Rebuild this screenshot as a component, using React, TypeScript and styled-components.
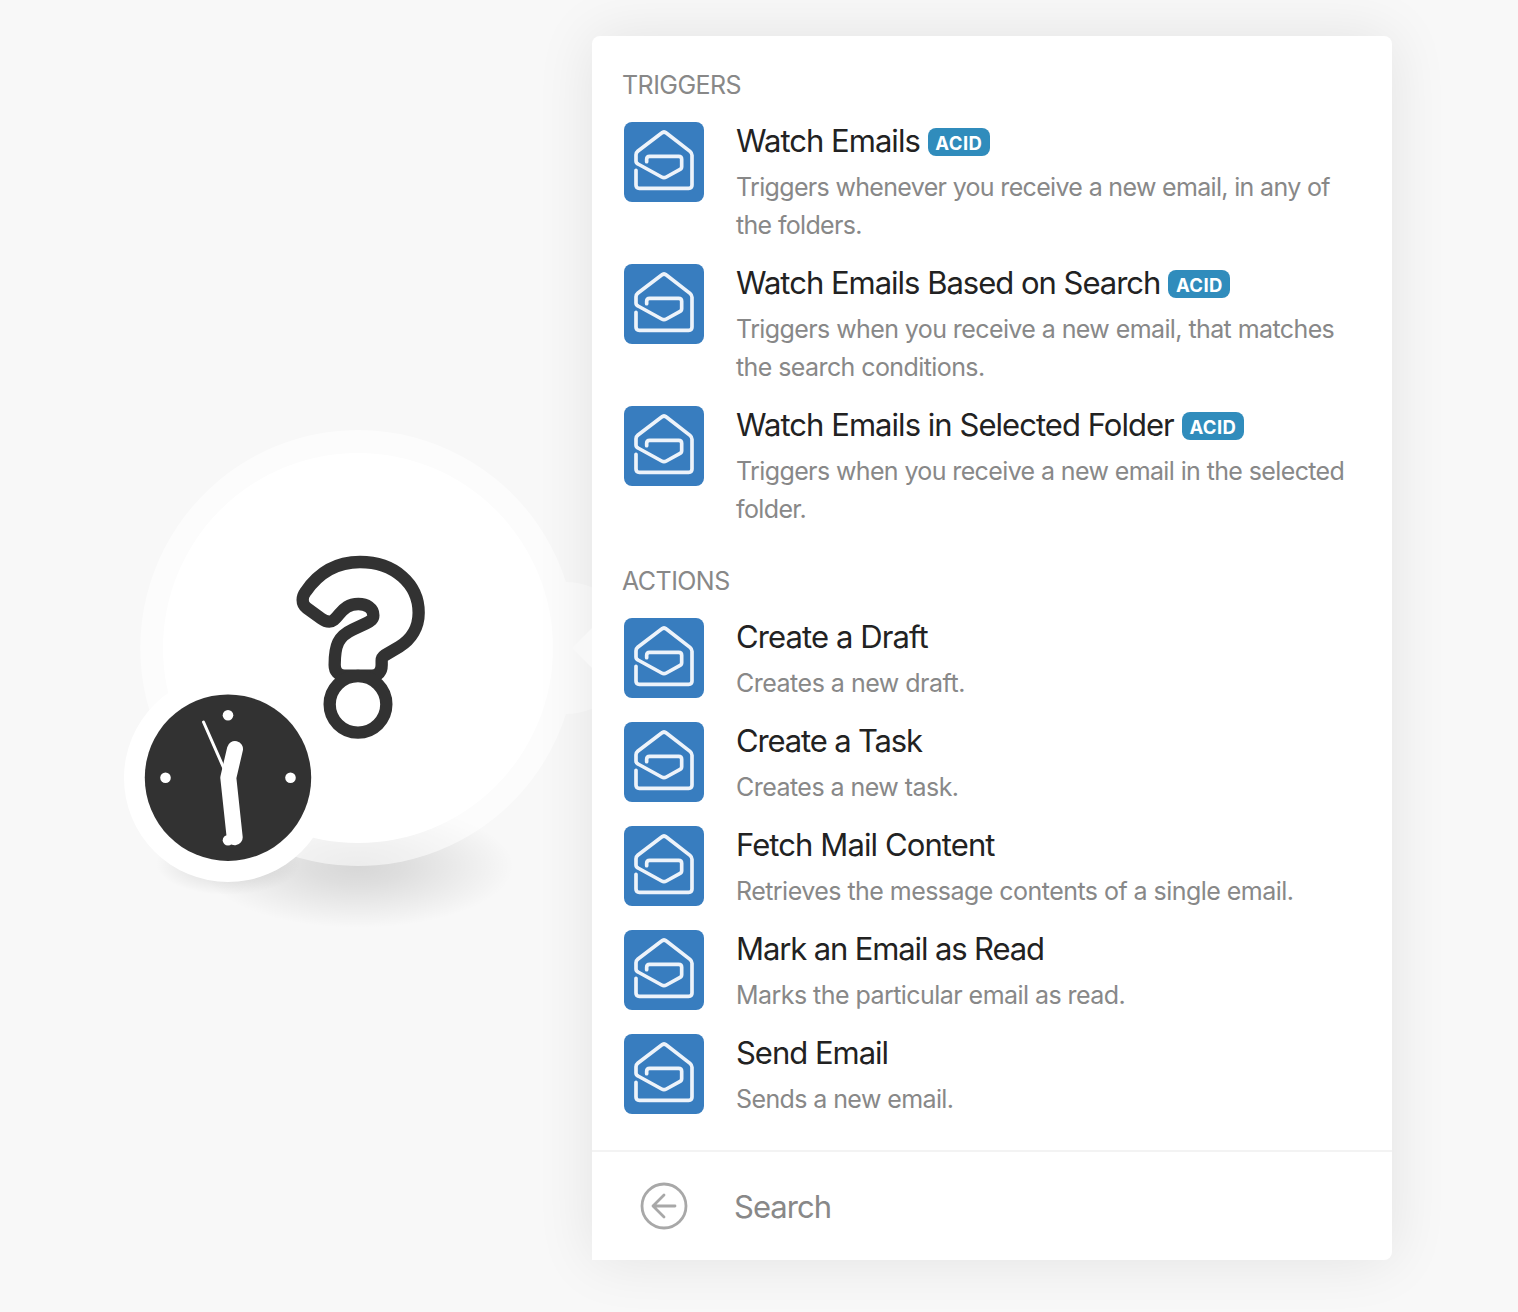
import styled, { createGlobalStyle } from "styled-components";

// tracking: letter spacing of the title and of the text
const triggers = [
  { id: 1, title: "Watch Emails", acid: true, tracking: [-0.98, -0.67], text: "Triggers whenever you receive a new email, in any of the folders." },
  { id: 2, title: "Watch Emails Based on Search", acid: true, tracking: [-1.01, -0.59], text: "Triggers when you receive a new email, that matches the search conditions." },
  { id: 3, title: "Watch Emails in Selected Folder", acid: true, tracking: [-0.96, -0.62], text: "Triggers when you receive a new email in the selected folder." },
];

const actions = [
  { id: 4, title: "Create a Draft", acid: false, tracking: [-0.9, -0.5], text: "Creates a new draft." },
  { id: 5, title: "Create a Task", acid: false, tracking: [-1.15, -0.54], text: "Creates a new task." },
  { id: 6, title: "Fetch Mail Content", acid: false, tracking: [-0.9, -0.54], text: "Retrieves the message contents of a single email." },
  { id: 7, title: "Mark an Email as Read", acid: false, tracking: [-1.12, -0.55], text: "Marks the particular email as read." },
  { id: 8, title: "Send Email", acid: false, tracking: [-1.02, -0.6], text: "Sends a new email." },
];

type Module = (typeof triggers)[number];

export default function App() {
  return (
    <>
      <GlobalStyle />
      <Page>
        <Canvas>
          <ModuleNode />
        </Canvas>
        <Panel>
          <Pointer />
          <List>
            <Section title="Triggers" items={triggers} />
            <Section title="Actions" items={actions} />
          </List>
          <Footer>
            <BackIcon />
            <SearchInput placeholder="Search" />
          </Footer>
        </Panel>
      </Page>
    </>
  );
}

function Section({ title, items }: { title: string; items: Module[] }) {
  return (
    <section>
      <GroupTitle>{title}</GroupTitle>
      <Rows>
        {items.map((item) => (
          <Row key={item.id}>
            <MailIcon />
            <RowBody>
              <RowTitle $tracking={item.tracking[0]}>
                <span>{item.title}</span>
                {item.acid && <Badge>ACID</Badge>}
              </RowTitle>
              <RowText $tracking={item.tracking[1]}>{item.text}</RowText>
            </RowBody>
          </Row>
        ))}
      </Rows>
    </section>
  );
}

function MailIcon() {
  return (
    <IconBox>
      <svg width="80" height="80" viewBox="0 0 240 240" fill="none" stroke="#edf3fa" strokeWidth="11" strokeLinecap="round" strokeLinejoin="round">
        <path d="M36 145V189Q36 199 46 199H194Q204 199 204 189V100Q204 93 198 88L127 33Q120 27 113 33L42 87Q36 92 36 98V117Q36 123 42 126L113 165Q120 169 127 165L167 143Q173 140 173 134V112Q173 103 164 103H77Q68 103 68 112V119" />
      </svg>
    </IconBox>
  );
}

function BackIcon() {
  return (
    <svg width="48" height="48" viewBox="0 0 48 48" fill="none" stroke="#a8a8a8" strokeLinecap="round" strokeLinejoin="round">
      <circle cx="24" cy="24" r="22" strokeWidth="2.8" />
      <path d="M35 24H13M24 13L13 24L24 35" strokeWidth="2.8" />
    </svg>
  );
}

function ModuleNode() {
  return (
    <svg width="592" height="1312" viewBox="0 0 592 1312" fill="none">
      <defs>
        <radialGradient id="shadow">
          <stop offset="0" stopColor="#000" stopOpacity="0.135" />
          <stop offset="0.3" stopColor="#000" stopOpacity="0.105" />
          <stop offset="0.7" stopColor="#000" stopOpacity="0.045" />
          <stop offset="1" stopColor="#000" stopOpacity="0" />
        </radialGradient>
      </defs>

      <ellipse cx="358" cy="866" rx="156" ry="62" fill="url(#shadow)" />
      <ellipse cx="228" cy="864" rx="72" ry="31" fill="url(#shadow)" />

      {/* ring with the connector bump on its right side */}
      <path
        d="M566 582A66 66 0 0 1 566 714A218 218 0 1 1 566 582Z"
        fill="#fff"
        fillOpacity="0.55"
      />
      <circle cx="358" cy="648" r="195" fill="#fff" />

      {/* question mark */}
      <g transform="translate(270 530) scale(0.33333)" stroke="#323232" strokeWidth="37" strokeLinejoin="round">
        <path d="M270 96C373 96 446 162 446 248C446 292 424 328 388 350L344 376Q335 382 335 392V405C335 425 325 437 306 437H224C205 437 194 424 194 405C194 345 205 319 248 299L288 280C303 273 310 268 310 256C310 235 290 222 265 222C236 222 222 235 207 253C194 269 188 275 178 275C168 275 162 272 154 266L110 234C102 228 98 220 98 210C98 199 101 193 107 185C146 128 197 96 270 96Z" />
        <circle cx="264" cy="523" r="85" />
      </g>

      {/* schedule clock */}
      <circle cx="228" cy="778" r="104" fill="#fff" />
      <circle cx="228" cy="777.7" r="83.2" fill="#323232" />
      <g fill="#fff">
        <circle cx="228" cy="715.3" r="5.3" />
        <circle cx="165.5" cy="777.7" r="5.3" />
        <circle cx="290.5" cy="777.7" r="5.3" />
        <circle cx="228" cy="840.3" r="5.3" />
      </g>
      <g stroke="#fff" strokeLinecap="round" strokeLinejoin="round">
        <path d="M235 749L228.3 777.7L234.7 837.3" strokeWidth="16" />
        <path d="M203.5 722L228 777.7" strokeWidth="3" />
      </g>
    </svg>
  );
}

const GlobalStyle = createGlobalStyle`
  body {
    margin: 0;
    background: #f8f8f8;
    font-family: Inter, "Liberation Sans", sans-serif;
  }
`;

const Page = styled.div`
  display: flex;
  align-items: flex-start;
  height: 1312px;
  overflow: hidden;
`;

const Canvas = styled.div`
  width: 592px;
  height: 1312px;
  flex-shrink: 0;
`;

const Panel = styled.div`
  position: relative;
  display: flex;
  flex-direction: column;
  width: 800px;
  height: 1224px;
  margin-top: 36px;
  background: #fff;
  border-radius: 8px 8px 8px 0;
  box-shadow: 0 0 60px rgba(0, 0, 0, 0.09);
`;

const Pointer = styled.div`
  position: absolute;
  left: -20px;
  top: 592px;
  border: 20px solid transparent;
  border-left: none;
  border-right-color: #f8f8f8;
`;

const List = styled.div`
  display: flex;
  flex-direction: column;
  gap: 34px;
  flex: 1;
  padding: 30px 32px 0;
`;

const GroupTitle = styled.h3`
  margin: 0 0 18px -2px;
  font-size: 25px;
  font-weight: 400;
  line-height: 39px;
  height: 38px;
  letter-spacing: -0.55px;
  text-transform: uppercase;
  color: #888;
`;

const Rows = styled.div`
  display: flex;
  flex-direction: column;
  gap: 20px;
`;

const Row = styled.div`
  display: flex;
  gap: 32px;
`;

const IconBox = styled.div`
  width: 80px;
  height: 80px;
  flex-shrink: 0;
  border-radius: 8px;
  background: #387dbf;
`;

const RowBody = styled.div`
  flex: 1;
`;

const RowTitle = styled.div<{ $tracking: number }>`
  display: flex;
  align-items: center;
  gap: 8px;
  height: 36px;
  margin-bottom: 10px;
  font-size: 31px;
  letter-spacing: ${(p) => p.$tracking}px;
  white-space: nowrap;
  color: #222;
`;

const Badge = styled.span`
  width: 62px;
  height: 28px;
  margin-top: 4px;
  border-radius: 8px;
  background: #308cbc;
  color: #fff;
  font-size: 18.5px;
  font-weight: 700;
  line-height: 30px;
  letter-spacing: 0.4px;
  text-align: center;
`;

const RowText = styled.div<{ $tracking: number }>`
  font-size: 25px;
  line-height: 38px;
  letter-spacing: ${(p) => p.$tracking}px;
  color: #888;
`;

const Footer = styled.div`
  display: flex;
  align-items: center;
  gap: 46px;
  height: 108px;
  padding: 0 48px;
  border-top: 2px solid #f3f3f3;
`;

const SearchInput = styled.input`
  flex: 1;
  padding: 0;
  border: none;
  outline: none;
  background: none;
  font-family: inherit;
  font-size: 31px;
  letter-spacing: -0.95px;
  color: #888;

  &::placeholder {
    color: #888;
  }
`;
